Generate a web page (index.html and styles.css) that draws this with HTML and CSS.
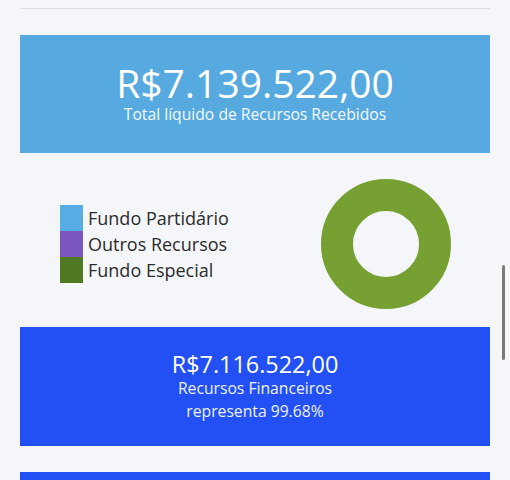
FILE: index.html
```html
<!DOCTYPE html>
<html lang="pt-BR">
<head>
<meta charset="utf-8">
<title>Recursos Recebidos</title>
<link rel="stylesheet" href="styles.css">
</head>
<body>
<div class="page">
  <div class="divider"></div>

  <section class="card card-light">
    <div class="big">R$7.139.522,00</div>
    <div class="sub">Total líquido de Recursos Recebidos</div>
  </section>

  <section class="chart">
    <ul class="legend">
      <li class="legend-item"><span class="swatch sw-blue"></span>Fundo Partidário</li>
      <li class="legend-item"><span class="swatch sw-purple"></span>Outros Recursos</li>
      <li class="legend-item"><span class="swatch sw-green"></span>Fundo Especial</li>
    </ul>
    <svg class="donut" width="130" height="130" viewBox="0 0 130 130">
      <circle cx="65" cy="65" r="49" fill="none" stroke="#77a033" stroke-width="32"/>
    </svg>
  </section>

  <section class="card card-blue">
    <div class="mid">R$7.116.522,00</div>
    <div class="line">Recursos Financeiros</div>
    <div class="line">representa 99.68%</div>
  </section>

  <section class="card card-blue card-next"></section>
</div>
<div class="scroll-thumb"></div>
</body>
</html>
```

FILE: styles.css
```css
html, body {
  margin: 0;
  padding: 0;
  background: #f4f6f9;
  overflow: hidden;
  height: 480px;
}
body {
  font-family: "Open Sans", "Noto Sans", sans-serif;
  color: #ffffff;
}
.page {
  padding: 0 20px;
  display: flex;
  flex-direction: column;
}
.divider {
  height: 8px;
  border-bottom: 1px solid #dde1e6;
  margin-bottom: 26px;
}
.card {
  text-align: center;
}
.card-light {
  background: #57aadf;
  padding: 27px 0 29px;
}
.big {
  font-size: 39px;
  line-height: 42px;
}
.sub {
  font-size: 15.7px;
  line-height: 20px;
  color: #f3f8fc;
}
.chart {
  display: flex;
  align-items: center;
  justify-content: space-between;
  padding: 26px 39px 18px 40px;
}
.legend {
  list-style: none;
  margin: 0;
  padding: 0;
  color: #2b2b2b;
  font-size: 18px;
}
.legend-item {
  display: flex;
  align-items: center;
  height: 26px;
}
.swatch {
  width: 23px;
  height: 26px;
  margin-right: 5px;
}
.sw-blue { background: #57ade3; }
.sw-purple { background: #7b56c1; }
.sw-green { background: #4f7a23; }
.donut {
  display: block;
}
.card-blue {
  background: #2250f4;
  padding: 24px 0 24px;
}
.mid {
  font-size: 23.4px;
  line-height: 26px;
}
.line {
  font-size: 15.7px;
  line-height: 22.5px;
  color: #eef2fe;
}
.card-next {
  margin-top: 26px;
  height: 100px;
  padding: 0;
}
.scroll-thumb {
  position: fixed;
  right: 5px;
  top: 265px;
  width: 3px;
  height: 95px;
  border-radius: 2px;
  background: #7a7a7a;
}
```
